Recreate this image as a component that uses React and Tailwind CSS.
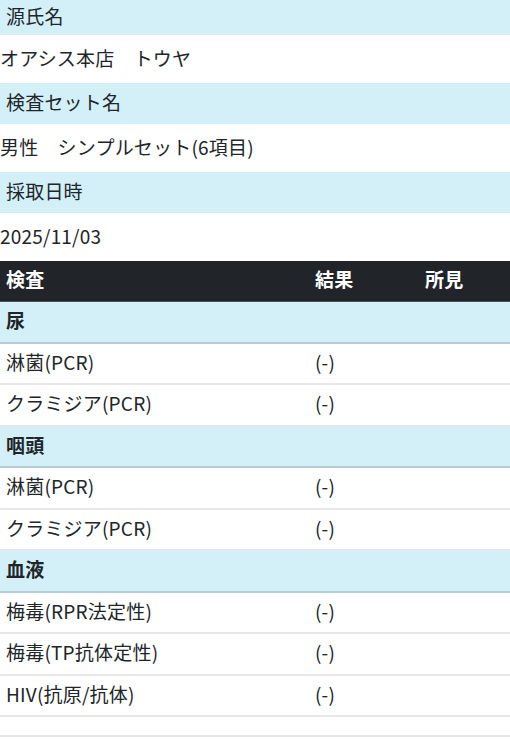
import React from "react";

const info = [
  { label: "源氏名", value: "オアシス本店　トウヤ" },
  { label: "検査セット名", value: "男性　シンプルセット(6項目)" },
  { label: "採取日時", value: "2025/11/03" },
];

const groups = [
  {
    name: "尿",
    items: [
      { name: "淋菌(PCR)", result: "(-)" },
      { name: "クラミジア(PCR)", result: "(-)" },
    ],
  },
  {
    name: "咽頭",
    items: [
      { name: "淋菌(PCR)", result: "(-)" },
      { name: "クラミジア(PCR)", result: "(-)" },
    ],
  },
  {
    name: "血液",
    items: [
      { name: "梅毒(RPR法定性)", result: "(-)" },
      { name: "梅毒(TP抗体定性)", result: "(-)" },
      { name: "HIV(抗原/抗体)", result: "(-)" },
    ],
  },
];

export default function App() {
  return (
    <div
      className="w-[510px] h-[739px] overflow-hidden bg-white text-[19px] leading-none text-[#212529] tracking-[0.2px]"
      style={{ fontFamily: '"Noto Sans CJK JP", sans-serif' }}
    >
      {info.map((row, i) => (
        <div key={row.label}>
          <div className={`flex items-center bg-[#d3f0f9] px-[6px] pb-[4px] ${i === 0 ? "h-[35px]" : "h-[41px]"}`}>
            {row.label}
          </div>
          <div className="flex h-[48px] items-center pb-[4px]">{row.value}</div>
        </div>
      ))}

      <table className="w-full table-fixed border-collapse">
        <colgroup>
          <col className="w-[309px]" />
          <col className="w-[110px]" />
          <col />
        </colgroup>
        <thead>
          <tr className="h-[40px] bg-[#212529] text-white border-b border-[#4a5055]">
            <th className="px-[6px] pb-[4px] text-left font-semibold">検査</th>
            <th className="px-[6px] pb-[4px] text-left font-semibold">結果</th>
            <th className="px-[6px] pb-[4px] text-left font-semibold">所見</th>
          </tr>
        </thead>
        <tbody>
          {groups.map((g) => (
            <React.Fragment key={g.name}>
              <tr className="h-[41.5px] bg-[#d3f0f9] border-b-2 border-[#b7cdd4]">
                <td colSpan={3} className="px-[6px] pb-[4px] font-semibold">{g.name}</td>
              </tr>
              {g.items.map((it, j) => (
                <tr key={j} className="h-[41.5px] border-b-2 border-[#e5e7e9]">
                  <td className="px-[6px] pb-[4px]">{it.name}</td>
                  <td className="px-[6px] pb-[4px]">{it.result}</td>
                  <td className="px-[6px] pb-[4px]"></td>
                </tr>
              ))}
            </React.Fragment>
          ))}
          <tr className="h-[20px] border-b-2 border-[#e5e7e9]">
            <td colSpan={3}></td>
          </tr>
        </tbody>
      </table>
    </div>
  );
}
